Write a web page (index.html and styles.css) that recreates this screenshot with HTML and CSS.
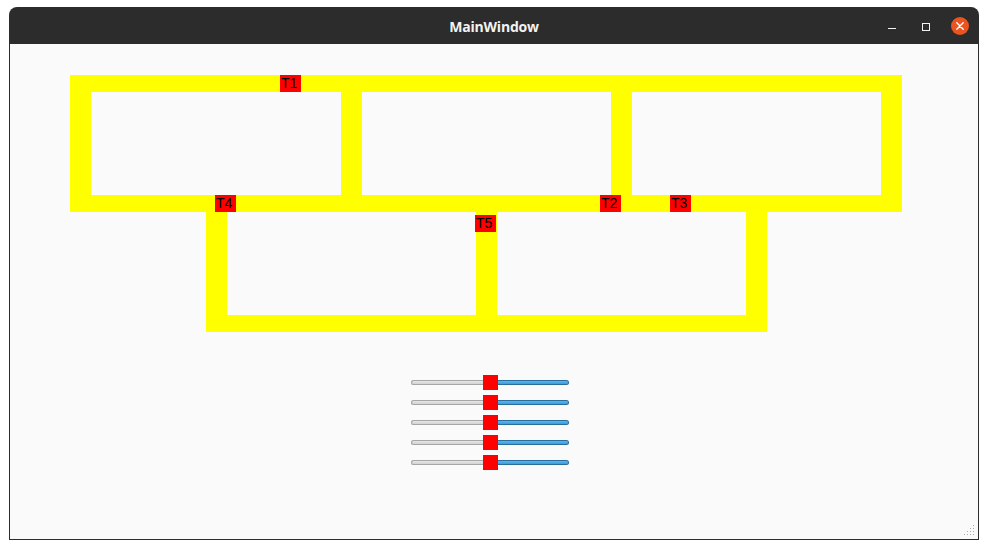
FILE: index.html
```html
<!DOCTYPE html>
<html>
<head>
<meta charset="utf-8">
<title>MainWindow</title>
<link rel="stylesheet" href="styles.css">
</head>
<body>
<div class="window">
  <div class="titlebar">
    <div></div>
    <div class="title">MainWindow</div>
    <div class="controls">
      <svg class="btn" width="24" height="24" viewBox="0 0 24 24"><line x1="8" y1="14.5" x2="16" y2="14.5" stroke="#f2f2f2" stroke-width="1.2"/></svg>
      <svg class="btn" width="24" height="24" viewBox="0 0 24 24"><rect x="8.5" y="9.5" width="7" height="7" fill="none" stroke="#f2f2f2" stroke-width="1"/></svg>
      <svg class="btn" width="24" height="24" viewBox="0 0 24 24"><circle cx="12" cy="12" r="9" fill="#e95420"/><path d="M8.8 8.8 L15.2 15.2 M15.2 8.8 L8.8 15.2" stroke="#fff" stroke-width="1.4" stroke-linecap="round"/></svg>
    </div>
  </div>
  <div class="content">
    <div class="canvas">
      <svg class="tracks" width="968" height="331" viewBox="0 0 968 331">
        <rect x="60" y="31" width="832" height="137" fill="#ffff00"/>
        <rect x="196" y="151" width="561" height="137" fill="#ffff00"/>
        <rect x="81" y="48" width="250" height="103" fill="#fafafa"/>
        <rect x="352" y="48" width="249" height="103" fill="#fafafa"/>
        <rect x="622" y="48" width="249" height="103" fill="#fafafa"/>
        <rect x="217" y="168" width="249" height="103" fill="#fafafa"/>
        <rect x="487" y="168" width="249" height="103" fill="#fafafa"/>
      </svg>
      <div class="tag t1">T1</div>
      <div class="tag t2">T2</div>
      <div class="tag t3">T3</div>
      <div class="tag t4">T4</div>
      <div class="tag t5">T5</div>
    </div>
    <div class="sliders">
      <div class="slider"><div class="groove-left"></div><div class="handle"></div><div class="groove-right"></div></div>
      <div class="slider"><div class="groove-left"></div><div class="handle"></div><div class="groove-right"></div></div>
      <div class="slider"><div class="groove-left"></div><div class="handle"></div><div class="groove-right"></div></div>
      <div class="slider"><div class="groove-left"></div><div class="handle"></div><div class="groove-right"></div></div>
      <div class="slider"><div class="groove-left"></div><div class="handle"></div><div class="groove-right"></div></div>
    </div>
    <svg class="grip" width="12" height="12" viewBox="0 0 12 12">
      <g fill="#a8a8a8">
        <rect x="9" y="0" width="1" height="1"/>
        <rect x="6" y="3" width="1" height="1"/><rect x="9" y="3" width="1" height="1"/>
        <rect x="3" y="6" width="1" height="1"/><rect x="6" y="6" width="1" height="1"/><rect x="9" y="6" width="1" height="1"/>
        <rect x="0" y="9" width="1" height="1"/><rect x="3" y="9" width="1" height="1"/><rect x="6" y="9" width="1" height="1"/><rect x="9" y="9" width="1" height="1"/>
      </g>
    </svg>
  </div>
</div>
</body>
</html>
```
FILE: styles.css
```css
html, body {
  margin: 0;
  padding: 0;
  background: #ffffff;
}
body {
  width: 988px;
  height: 549px;
  overflow: hidden;
  font-family: "Liberation Sans", Arial, sans-serif;
}
.window {
  margin: 7px 0 0 9px;
  width: 970px;
  height: 533px;
  background: #2c2c2c;
  border-radius: 8px 8px 0 0;
  display: flex;
  flex-direction: column;
  overflow: hidden;
}
.titlebar {
  height: 37px;
  display: grid;
  grid-template-columns: 1fr auto 1fr;
  align-items: center;
  flex: none;
}
.title {
  color: #f2f2f2;
  font-family: "Open Sans", "DejaVu Sans", sans-serif;
  font-weight: 700;
  font-size: 14px;
  line-height: 18px;
  padding-top: 2px;
  letter-spacing: -0.2px;
}
.controls {
  justify-self: end;
  align-self: start;
  margin-top: 7px;
  padding-right: 7px;
  display: flex;
  gap: 10px;
}
.btn {
  display: block;
}
.content {
  position: relative;
  flex: 1;
  margin: 0 1px 1px 1px;
  background: #fafafa;
}
.canvas {
  position: relative;
  height: 331px;
}
.tracks {
  display: block;
}
.tag {
  position: absolute;
  width: 21px;
  height: 17px;
  box-sizing: border-box;
  padding-left: 1px;
  background: #ff0000;
  color: #000;
  font-family: "Liberation Sans", Arial, sans-serif;
  font-size: 14px;
  line-height: 17px;
}
.t1 { left: 270px; top: 31px; }
.t2 { left: 590px; top: 151px; }
.t3 { left: 660px; top: 151px; }
.t4 { left: 205px; top: 151px; }
.t5 { left: 465px; top: 171px; }
.sliders {
  margin-left: 401px;
  width: 158px;
  display: flex;
  flex-direction: column;
  gap: 5px;
}
.slider {
  height: 15px;
  display: flex;
  align-items: center;
}
.groove-left {
  width: 72px;
  height: 5px;
  box-sizing: border-box;
  border: 1px solid #a6a6a6;
  border-right: none;
  border-radius: 3px 0 0 3px;
  background: linear-gradient(#e6e6e6, #d2d2d2);
}
.handle {
  width: 15px;
  height: 15px;
  background: #ff0000;
  flex: none;
}
.groove-right {
  width: 71px;
  height: 5px;
  box-sizing: border-box;
  border: 1px solid #2a6f9c;
  border-left: none;
  border-radius: 0 3px 3px 0;
  background: linear-gradient(#5ab6ec, #3a9ddc);
}
.grip {
  position: absolute;
  right: 2px;
  bottom: 2px;
}
```
